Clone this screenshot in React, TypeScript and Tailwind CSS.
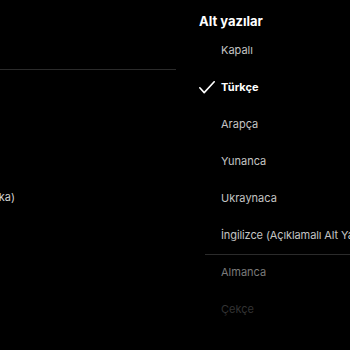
import { ReactNode } from "react";

const Row = ({
  children,
  className = "",
}: {
  children: ReactNode;
  className?: string;
}) => (
  <div className={`flex h-[37px] items-center ${className}`}>{children}</div>
);

export default function App() {
  return (
    <div
      className="flex h-[350px] w-[350px] overflow-hidden bg-black"
      style={{ fontFamily: "Inter, 'Noto Sans', sans-serif" }}
    >
      {/* audio column, cut off at the left edge */}
      <div className="flex w-[176px] shrink-0 flex-col">
        <div className="h-[69px]" />
        <div className="h-px w-full bg-[#2b2b2b]" />
        <div className="flex h-[117px]" />
        <div className="flex h-[20px] items-center justify-end overflow-visible">
          <span className="mr-[161px] whitespace-nowrap text-[11px] text-[#d0d0d0]">
            İngilizce (Amerika)
          </span>
        </div>
      </div>

      {/* subtitle column */}
      <div className="ml-[23px] flex min-w-0 flex-1 flex-col">
        <div className="flex h-[32px] items-start pt-[13px]">
          <span className="whitespace-nowrap text-[13px] leading-4 font-bold text-white">
            Alt yazılar
          </span>
        </div>
        <Row>
          <span className="ml-[22px] text-[11px] text-[#c4c4c4]">Kapalı</span>
        </Row>
        <Row>
          <svg
            viewBox="0 0 16 13"
            className="h-[13px] w-[16px]"
            fill="none"
            stroke="white"
            strokeWidth="1.6"
            strokeLinecap="round"
            strokeLinejoin="round"
          >
            <path d="M0.8 6.8 L5.2 11.6 L15.2 0.8" />
          </svg>
          <span className="ml-[6px] text-[11px] font-bold text-white">
            Türkçe
          </span>
        </Row>
        <Row>
          <span className="ml-[22px] text-[11px] text-[#c4c4c4]">Arapça</span>
        </Row>
        <Row>
          <span className="ml-[22px] text-[11px] text-[#c4c4c4]">Yunanca</span>
        </Row>
        <Row>
          <span className="ml-[22px] text-[11px] text-[#c4c4c4]">Ukraynaca</span>
        </Row>
        <Row>
          <span className="ml-[22px] whitespace-nowrap text-[11px] tracking-[-0.1px] text-[#c4c4c4]">
            İngilizce (Açıklamalı Alt Yazı)
          </span>
        </Row>
        <div className="ml-[6px] h-px bg-[#2b2b2b]" />
        <Row className="-mt-px">
          <span className="ml-[22px] text-[11px] text-[#7a7a7a]">Almanca</span>
        </Row>
        <Row>
          <span className="ml-[22px] text-[11px] text-[#333333]">Çekçe</span>
        </Row>
      </div>
    </div>
  );
}
